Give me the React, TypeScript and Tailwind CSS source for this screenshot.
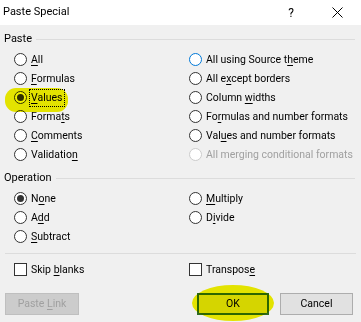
import React from "react";

const font = { fontFamily: 'Roboto, "Noto Sans", sans-serif' };

function Mn({ text, idx }: { text: string; idx: number }) {
  return (
    <span>
      {text.slice(0, idx)}
      <span className="underline underline-offset-[2px] decoration-1">{text[idx]}</span>
      {text.slice(idx + 1)}
    </span>
  );
}

function Radio({ checked, blue, disabled }: { checked?: boolean; blue?: boolean; disabled?: boolean }) {
  const border = disabled ? "border-[#cccccc]" : blue ? "border-[#0078d7]" : "border-[#333333]";
  return (
    <span className={`w-[13px] h-[13px] rounded-full border ${border} bg-white flex items-center justify-center shrink-0`}>
      {checked && <span className="w-[7px] h-[7px] rounded-full bg-[#333333]" />}
    </span>
  );
}

function RRow({ text, idx, checked, blue, disabled, focus }: { text: string; idx: number; checked?: boolean; blue?: boolean; disabled?: boolean; focus?: boolean }) {
  return (
    <div className="h-[19px] flex items-center gap-[4px] whitespace-nowrap">
      <Radio checked={checked} blue={blue} disabled={disabled} />
      <span className={`${disabled ? "text-[#a0a0a0]" : "text-black"} ${focus ? "outline outline-1 outline-dotted outline-black outline-offset-[1px]" : ""} leading-[14px]`}>
        {idx >= 0 ? <Mn text={text} idx={idx} /> : text}
      </span>
    </div>
  );
}

function Group({ label }: { label: string }) {
  return (
    <div className="h-[14px] flex items-center gap-[4px] pl-[4px] pr-[6px]">
      <span className="leading-[14px] text-[11px]">{label}</span>
      <div className="flex-1 border-t border-[#dcdcdc] mt-[1px]" />
    </div>
  );
}

function Check({ text, idx }: { text: string; idx: number }) {
  return (
    <div className="h-[19px] flex items-center gap-[4px] whitespace-nowrap">
      <span className="w-[13px] h-[13px] border border-[#333333] bg-white shrink-0" />
      <span className="leading-[14px]"><Mn text={text} idx={idx} /></span>
    </div>
  );
}

export default function App() {
  return (
    <div className="relative w-[361px] h-[322px] bg-[#f0f0f0] text-[10.5px] text-black overflow-hidden" style={font}>
      <div className="h-[25px] bg-white flex items-center pl-[3px]">
        <span className="flex-1 text-[11px]">Paste Special</span>
        <span className="w-[10px] text-center mr-[36px] text-[12px]">?</span>
        <svg width="11" height="11" viewBox="0 0 11 11" className="mr-[18px]">
          <path d="M0.5 0.5 L10.5 10.5 M10.5 0.5 L0.5 10.5" stroke="#000" strokeWidth="1" />
        </svg>
      </div>

      <div className="pt-[7px]">
        <Group label="Paste" />
        <div className="mt-[4px] grid grid-cols-[189px_1fr]">
          <div className="pl-[14px] flex flex-col">
            <RRow text="All" idx={0} />
            <RRow text="Formulas" idx={0} />
            <RRow text="Values" idx={0} checked focus />
            <RRow text="Formats" idx={5} />
            <RRow text="Comments" idx={0} />
            <RRow text="Validation" idx={9} />
          </div>
          <div className="flex flex-col">
            <RRow text="All using Source theme" idx={18} blue />
            <RRow text="All except borders" idx={5} />
            <RRow text="Column widths" idx={7} />
            <RRow text="Formulas and number formats" idx={2} />
            <RRow text="Values and number formats" idx={3} />
            <RRow text="All merging conditional formats" idx={-1} disabled />
          </div>
        </div>

        <div className="mt-[7px]">
          <Group label="Operation" />
        </div>
        <div className="mt-[4px] grid grid-cols-[189px_1fr]">
          <div className="pl-[14px] flex flex-col">
            <RRow text="None" idx={1} checked />
            <RRow text="Add" idx={1} />
            <RRow text="Subtract" idx={0} />
          </div>
          <div className="flex flex-col">
            <RRow text="Multiply" idx={0} />
            <RRow text="Divide" idx={1} />
          </div>
        </div>

        <div className="mt-[7px] mx-[5px] border-t border-[#dcdcdc]" />
        <div className="mt-[6px] grid grid-cols-[189px_1fr]">
          <div className="pl-[14px]">
            <Check text="Skip blanks" idx={5} />
          </div>
          <div>
            <Check text="Transpose" idx={8} />
          </div>
        </div>

        <div className="mt-[14px] flex items-center px-[5px]">
          <div className="w-[74px] h-[22px] bg-[#cccccc] border border-[#bfbfbf] flex items-center justify-center text-[#a0a0a0]">
            <Mn text="Paste Link" idx={6} />
          </div>
          <div className="flex-1" />
          <div className="w-[72px] h-[22px] bg-[#e1e1e1] border-2 border-[#2f6b1f] flex items-center justify-center">OK</div>
          <div className="w-[73px] h-[22px] ml-[11px] mr-[3px] bg-[#e1e1e1] border border-[#adadad] flex items-center justify-center">Cancel</div>
        </div>
      </div>

      <div className="absolute left-[5px] top-[88px] w-[63px] h-[24px] rounded-[11px] bg-[#f2f200] mix-blend-multiply pointer-events-none" />
      <div className="absolute left-[192px] top-[285px] w-[82px] h-[36px] rounded-[50%] bg-[#f2f200] mix-blend-multiply pointer-events-none" />
    </div>
  );
}
